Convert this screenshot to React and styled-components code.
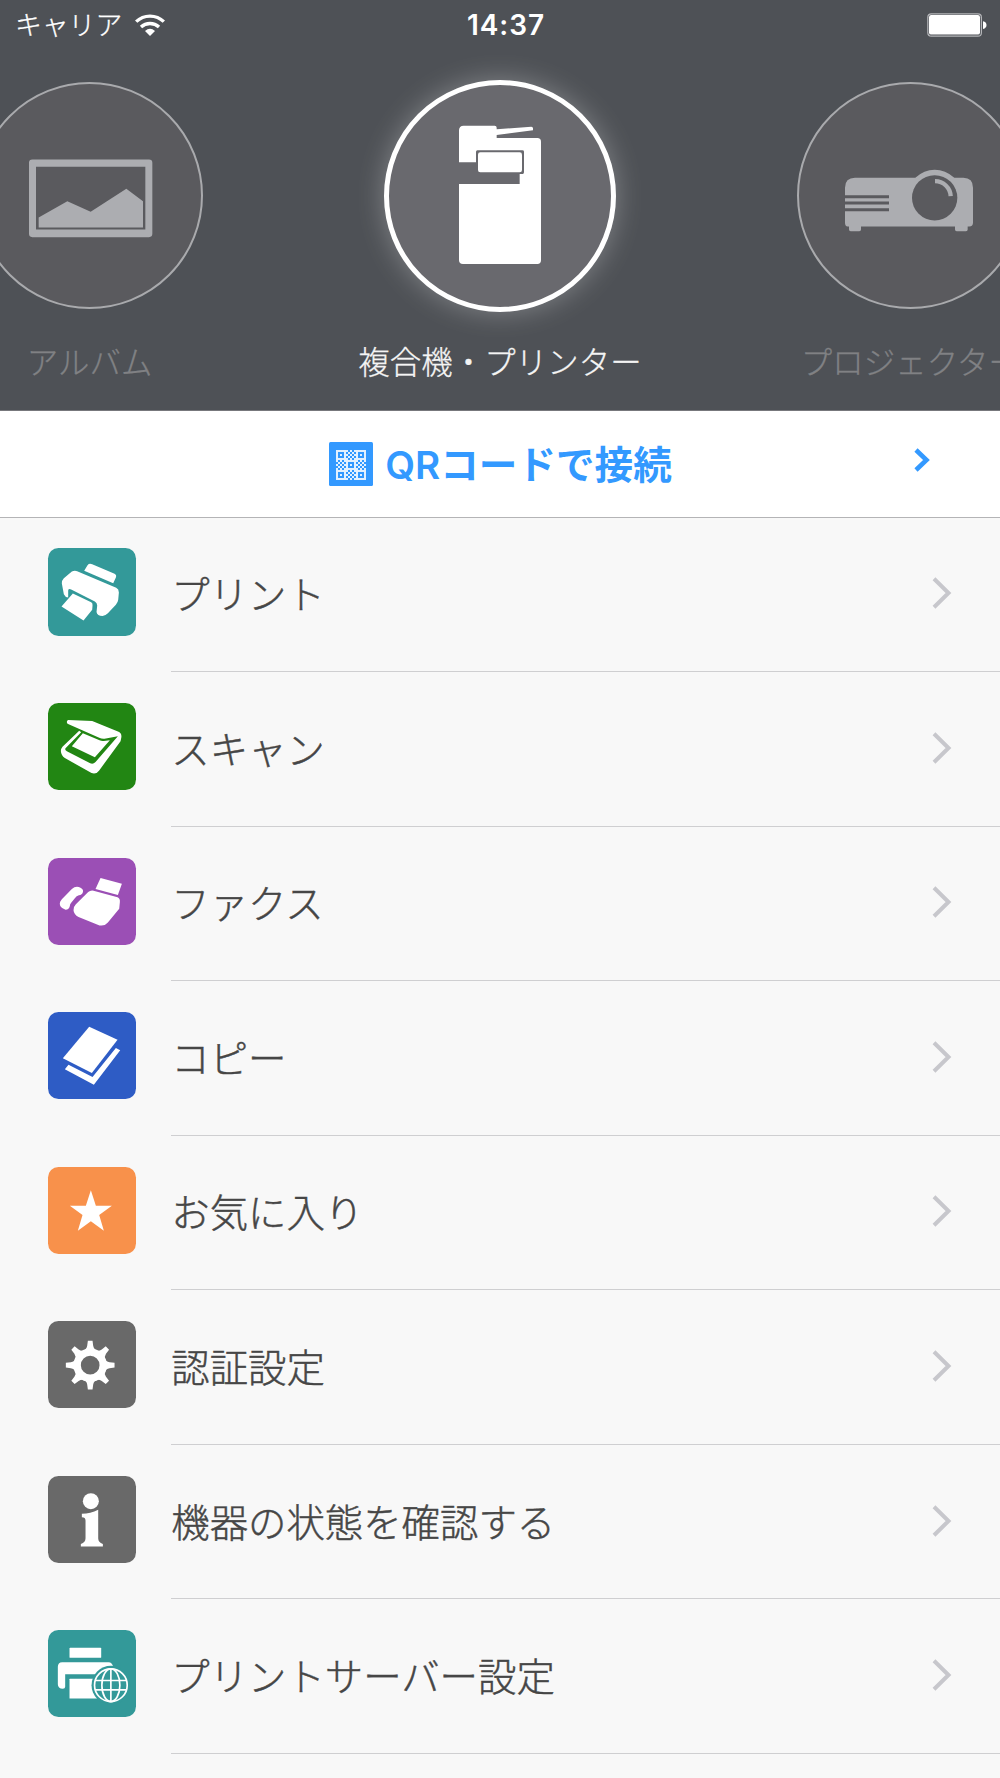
import styled, { createGlobalStyle } from 'styled-components';

const GlobalStyle = createGlobalStyle`
  * {
    box-sizing: border-box;
  }
  body {
    margin: 0;
    background-color: #f8f8f8;
    font-family: 'Noto Sans CJK JP', sans-serif;
    overflow: hidden;
  }
  svg {
    display: block;
    flex-shrink: 0;
  }
`;

const AlbumGlyph = () => (
  <svg width="223" height="223" viewBox="-66 251.500 669 669" fill="#acadb1">
    <path
      fillRule="evenodd"
      d="M97 478H447Q457 478 457 488V701Q457 711 447 711H97Q87 711 87 701V488Q87 478 97 478ZM108 500V688H436V500Z"
    />
    <path d="M116 652L202 603L272 635L379 566L429 603V682H116Z" />
  </svg>
);

const CopierGlyph = () => (
  <svg width="222" height="222" viewBox="147 254 666 666" fill="#fff">
    <path d="M371 376H464Q470 376 470 382V387L574 379Q579 379 579 384V390L470 404V413H592Q603 413 603 424V780Q603 791 592 791H369Q357 791 357 780V551H539V521H548Q552 521 552 516V454Q552 450 547 450H412Q408 450 408 455V486H357V390Q357 376 371 376Z" />
    <rect x="414" y="456" width="132" height="60" rx="7" />
  </svg>
);

const ProjectorGlyph = () => (
  <svg width="223" height="223" viewBox="357 251.500 669 669" fill="#acadb1">
    <path d="M525 533H706Q732 509 764 509Q796 509 823 533H850Q879 533 879 563V668Q879 679 868 679H863V688Q863 693 858 693H830Q825 693 825 688V679H543V688Q543 693 538 693H512Q507 693 507 688V679H503Q495 679 495 668V563Q495 533 525 533Z" />
    <path d="M494 589.500H627M494 608.500H627M494 628.500H627" stroke="#5a5a5e" strokeWidth="9" />
    <circle cx="764" cy="593" r="68" fill="#5a5a5e" />
    <path d="M765 543A47 47 0 0 1 812 588" fill="none" stroke="#acadb1" strokeWidth="13" />
  </svg>
);

const WifiGlyph = () => (
  <svg width="30" height="22" viewBox="406 38 90 66" fill="none" stroke="#fff">
    <path d="M409.500 61A59.500 59.500 0 0 1 492.500 61" strokeWidth="10" />
    <path d="M424 77A40 40 0 0 1 478 77" strokeWidth="10" />
    <path d="M436 89Q451 76 466 89L451 104Z" fill="#fff" stroke="none" />
  </svg>
);

const BatteryGlyph = () => (
  <svg width="60" height="24" viewBox="0 0 60 24">
    <rect x="0.8" y="0.8" width="53.600" height="22.400" rx="3.500" fill="none" stroke="#b4b5b8" strokeWidth="1.200" />
    <rect x="2" y="2" width="51" height="19.600" rx="2.200" fill="#fff" />
    <path d="M56 8.200Q59.500 9 59.500 12T56 16Z" fill="#fff" />
  </svg>
);

// 15x15 modules: five finder blocks with checkered blocks between them
const qrModules = [];
for (let y = 0; y < 15; y++) {
  for (let x = 0; x < 15; x++) {
    const bx = Math.floor(x / 5);
    const by = Math.floor(y / 5);
    const ring = Math.max(Math.abs((x % 5) - 2), Math.abs((y % 5) - 2));
    const isFinder = (bx + by) % 2 === 0;
    if (isFinder ? ring !== 1 : (x + y) % 2 === 1) {
      qrModules.push([x, y]);
    }
  }
}

const QrGlyph = () => (
  <svg width="44" height="44" viewBox="0 0 44 44">
    <rect width="44" height="44" rx="1.500" fill="#3399ff" />
    <g transform="translate(7 8) scale(2)" fill="#e4f1ff">
      {qrModules.map(([x, y]) => (
        <rect key={`${x}-${y}`} x={x} y={y} width="1" height="1" />
      ))}
    </g>
  </svg>
);

const PrintIcon = () => (
  <g>
    <path d="M163 123L173 106Q178 99 187 103L254 132Q261 136 258 143L250 160Z" />
    <path d="M126 125Q134 121 142 124L259 174Q267 178 267 188L265 210Q264 218 258 225L234 250Q228 257 218 258Q202 258 200 246L202 227Q202 219 195 215L124 179Q116 175 115 182V203Q106 202 102 193L96 161Q95 152 102 145Z" />
    <path d="M129 191L184 217Q189 220 188 227L187 240L161 272L95 230Z" />
  </g>
);

const ScanIcon = () => (
  <g>
    <path d="M115 90L187 93L266 125Q277 130 274 144L272 154L208 241Q199 254 185 249L105 204Q94 197 93 183Q93 176 98 170L148 122L154 127L107 175Q104 180 111 184L181 220Q190 224 197 216L264 139L224 146Q216 147 208 143L113 101Q108 94 115 90Z" />
    <path d="M159 130L209 151Q215 154 222 153L240 151L195 202L126 169Z" />
  </g>
);

const FaxIcon = () => (
  <g>
    <path d="M212 563L276 580L264 614L197 596Z" />
    <path d="M96 627L126 596Q138 585 152 592Q162 597 159 606Q157 614 147 615Q140 617 135 624L124 637Q120 641 120 647Q118 658 107 658L97 653Q87 645 91 634Z" />
    <path d="M175 605Q182 599 191 601L263 621Q271 624 270 635L268 655L234 696Q224 708 209 705L146 680Q132 673 131 660Q130 650 138 642Z" />
  </g>
);

const CopyIcon = () => (
  <g>
    <path d="M178 80L263 119L186 219L99 175Z" />
    <path d="M116 194L188 231L258 144L271 151L192 254L105 208Z" />
  </g>
);

const StarIcon = () => (
  <path d="M183 570L198 616H246L208 644L222 691L183 663L144 691L158 644L120 616H168Z" />
);

const GearIcon = () => (
  <g>
    {[0, 45, 90, 135, 180, 225, 270, 315].map((deg) => (
      <path
        key={deg}
        transform={`rotate(${deg} 181 196)`}
        d="M174 123H188L190 138Q192 149 202 153H160Q170 149 172 138Z"
      />
    ))}
    <circle cx="181" cy="196" r="39" fill="none" stroke="#fff" strokeWidth="22" />
  </g>
);

const InfoIcon = () => (
  <g>
    <circle cx="183" cy="603" r="24" />
    <path d="M156 641Q182 641 205 629V714Q205 727 219 731V739H153V731Q167 727 167 714V661Q167 651 156 651Z" />
  </g>
);

const ServerIcon = () => (
  <g>
    <rect x="119" y="145" width="95" height="30" rx="2" />
    <path d="M97 188H236Q247 188 250 202V224H106V262Q106 268 99 268Q84 266 84 254V202Q84 188 97 188Z" />
    <rect x="119" y="238" width="100" height="59" rx="1" />
    <circle cx="243" cy="257" r="58" fill="#339999" />
    <g fill="none" stroke="#fff" strokeWidth="5">
      <circle cx="243" cy="257" r="49" />
      <ellipse cx="243" cy="257" rx="27" ry="49" />
      <path d="M243 207V307M195 243H291M195 271H291" />
    </g>
  </g>
);

const menu = [
  { label: 'プリント', color: '#339999', box: '54.500 54.500 262 262', icon: <PrintIcon /> },
  { label: 'スキャン', color: '#228613', box: '54.500 39 262 262', icon: <ScanIcon /> },
  { label: 'ファクス', color: '#9b4fb5', box: '54.500 503 262 262', icon: <FaxIcon /> },
  { label: 'コピー', color: '#2e5cc5', box: '54.500 36 262 262', icon: <CopyIcon /> },
  { label: 'お気に入り', color: '#f8914b', box: '54.500 500 262 262', icon: <StarIcon /> },
  { label: '認証設定', color: '#696969', box: '54.500 63.500 262 262', icon: <GearIcon /> },
  { label: '機器の状態を確認する', color: '#696969', box: '54.500 527.500 262 262', icon: <InfoIcon /> },
  { label: 'プリントサーバー設定', color: '#339999', box: '54.500 91.500 262 262', icon: <ServerIcon /> },
];

const App = () => {
  return (
    <Screen>
      <GlobalStyle />
      <Header>
        <StatusBar>
          <Carrier>
            <CarrierName>キャリア</CarrierName>
            <WifiGlyph />
          </Carrier>
          <Clock>14:37</Clock>
          <Battery>
            <BatteryGlyph />
          </Battery>
        </StatusBar>
        <Carousel>
          <Slide>
            <CircleArea>
              <Circle>
                <AlbumGlyph />
              </Circle>
            </CircleArea>
            <SlideLabel>アルバム</SlideLabel>
          </Slide>
          <Slide>
            <CircleArea>
              <Circle $active>
                <CopierGlyph />
              </Circle>
            </CircleArea>
            <SlideLabel $active>複合機・プリンター</SlideLabel>
          </Slide>
          <Slide>
            <CircleArea>
              <Circle>
                <ProjectorGlyph />
              </Circle>
            </CircleArea>
            <SlideLabel>プロジェクター</SlideLabel>
          </Slide>
        </Carousel>
      </Header>

      <QrButton>
        <QrContent>
          <QrGlyph />
          <QrLabel>QRコードで接続</QrLabel>
        </QrContent>
        <QrArrow width="16" height="24" viewBox="0 0 16 24">
          <path d="M2 2L12.500 12L2 22" fill="none" stroke="#3399ff" strokeWidth="4.600" />
        </QrArrow>
      </QrButton>

      <Menu>
        {menu.map(({ label, color, box, icon }) => (
          <MenuItem key={label}>
            <Tile $color={color}>
              <svg width="87.400" height="87.400" viewBox={box} fill="#fff">
                {icon}
              </svg>
            </Tile>
            <MenuBody>
              <MenuLabel>{label}</MenuLabel>
              <svg width="20" height="32" viewBox="0 0 20 32">
                <path d="M2 1.800L16.500 16L2 30.200" fill="none" stroke="#c7c7cc" strokeWidth="4" />
              </svg>
            </MenuBody>
          </MenuItem>
        ))}
      </Menu>
    </Screen>
  );
};

export default App;

const Screen = styled.div`
  width: 1000px;
  height: 1778px;
  overflow: hidden;
  background-color: #f8f8f8;
`;

const Header = styled.header`
  height: 411px;
  background-color: #4e5156;
  border-bottom: 1px solid #77787c;
`;

const StatusBar = styled.div`
  display: grid;
  grid-template-columns: 1fr auto 1fr;
  align-items: center;
  height: 50px;
  padding: 0 13px 0 15px;
  color: #fff;
`;

const Carrier = styled.div`
  display: flex;
  align-items: center;
  gap: 13px;
  height: 48px;
`;

const CarrierName = styled.span`
  padding-bottom: 2px;
  font-size: 26.8px;
  font-weight: 300;
  line-height: 46px;
  -webkit-text-stroke: 0.3px;
`;

const Clock = styled.div`
  padding-left: 10px;
  font-family: Inter, sans-serif;
  font-size: 28px;
  font-weight: 600;
  letter-spacing: 0.9px;
`;

const Battery = styled.div`
  display: flex;
  justify-content: flex-end;
`;

const Carousel = styled.div`
  display: flex;
  justify-content: center;
  height: 360px;
  padding-top: 30px;
  overflow: hidden;
`;

const Slide = styled.div`
  display: flex;
  flex-direction: column;
  align-items: center;
  flex: 0 0 410.4px;
`;

const CircleArea = styled.div`
  display: flex;
  align-items: center;
  height: 231px;
`;

const Circle = styled.div`
  display: flex;
  border: ${({ $active }) => ($active ? '5px solid #fff' : '2px solid #a9aaad')};
  border-radius: 50%;
  background-color: ${({ $active }) => ($active ? '#69696e' : '#5a5a5e')};
  box-shadow: ${({ $active }) =>
    $active ? '0 0 28px rgba(255, 255, 255, 0.3)' : 'none'};
`;

const SlideLabel = styled.div`
  margin-top: 32px;
  font-size: 31.4px;
  font-weight: 300;
  line-height: 36px;
  letter-spacing: 0.1px;
  white-space: nowrap;
  color: ${({ $active }) => ($active ? '#f4f4f4' : '#808184')};
  -webkit-text-stroke: 0.3px;
`;

const QrButton = styled.div`
  display: grid;
  grid-template-columns: 1fr auto 1fr;
  align-items: center;
  height: 106.5px;
  padding: 0 70px;
  background-color: #fff;
  border-bottom: 1px solid #b4b4b6;
`;

const QrContent = styled.div`
  display: flex;
  grid-column: 2;
  align-items: center;
  gap: 12px;
  padding-left: 1px;
`;

const QrLabel = styled.div`
  padding-top: 2px;
  font-family: Inter, 'Noto Sans CJK JP', sans-serif;
  font-size: 38.6px;
  font-weight: 600;
  line-height: 50px;
  color: #3399ff;
`;

const QrArrow = styled.svg`
  justify-self: end;
  margin-bottom: 7px;
`;

const Menu = styled.div`
  display: flex;
  flex-direction: column;
`;

const MenuItem = styled.div`
  display: flex;
  flex-shrink: 0;
  height: 154.55px;
  padding-left: 48.2px;
`;

const Tile = styled.div`
  width: 87.4px;
  height: 87.2px;
  margin: 30.93px 35.7px 0 0;
  border-radius: 10.5px;
  background-color: ${({ $color }) => $color};
`;

const MenuBody = styled.div`
  display: flex;
  flex: 1;
  align-items: center;
  justify-content: space-between;
  padding: 0 48px 2px 0;
  border-bottom: 1px solid #cfcfd1;
`;

const MenuLabel = styled.div`
  padding-bottom: 2px;
  font-size: 38.4px;
  font-weight: 300;
  line-height: 56px;
  color: #464646;
  -webkit-text-stroke: 0.45px;
`;
